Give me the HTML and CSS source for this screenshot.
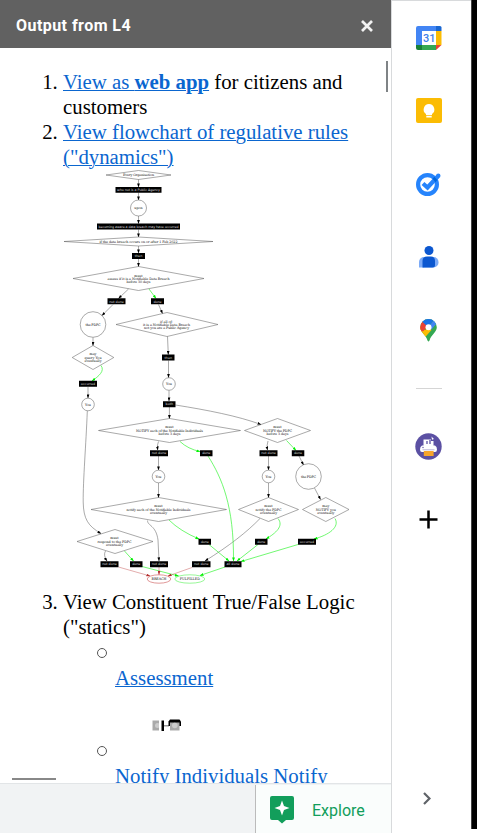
FILE: index.html
```html
<!DOCTYPE html>
<html lang="en">
<head>
<meta charset="utf-8">
<title>Output from L4</title>
<link rel="stylesheet" href="styles.css">
</head>
<body>
<div class="app">
  <main class="panel">
    <header class="panel-header">
      <h1>Output from L4</h1>
      <svg class="close" width="14" height="14" viewBox="0 0 14 14"><path d="M2 2l10 10M12 2L2 12"/></svg>
    </header>
    <div class="content">
      <ol class="outputs">
        <li><a href="#">View as <b>web app</b></a> for citizens and customers</li>
        <li><a href="#">View flowchart of regulative rules ("dynamics")</a>
          <svg class="flow" width="288" height="420" viewBox="63 170 288 420">
            <defs>
              <marker id="k" markerUnits="userSpaceOnUse" markerWidth="4" markerHeight="3" refX="3.6" refY="1.5" orient="auto"><path d="M0 .1L4 1.5L0 2.900z" fill="#000"/></marker>
              <marker id="g" markerUnits="userSpaceOnUse" markerWidth="4" markerHeight="3" refX="3.6" refY="1.5" orient="auto"><path d="M0 .1L4 1.5L0 2.900z" fill="#00f000"/></marker>
              <marker id="r" markerUnits="userSpaceOnUse" markerWidth="4" markerHeight="3" refX="3.6" refY="1.5" orient="auto"><path d="M0 .1L4 1.5L0 2.900z" fill="#b22a2a"/></marker>
            </defs>
            <g class="edge">
              <path d="M138.500 179.500V187"/><path d="M138.500 192.500V200"/><path d="M138.500 216V223.500"/><path d="M138.500 229.500V237"/><path d="M138.500 246V253"/><path d="M138.500 259V266.500"/>
              <path d="M128.500 289L118.500 298.500"/><path d="M113 304.500L102 315.500"/><path d="M158.500 304.500L162.500 313.500"/>
              <path d="M93 337.500V345.500"/><path d="M88 387V398"/><path d="M167.500 336.500L168.300 354.500"/><path d="M168.500 360.500V377.500"/><path d="M169 390.500V401"/><path d="M169.400 407V418.500"/>
              <path d="M175.500 405C207 410 238 416 261 424.500"/>
              <path d="M87.300 411C86 445 83 480 83.200 502C83.500 519 88 526 101 533.500"/>
              <path d="M158.500 441.500Q157 444 157.700 450"/><path d="M158.500 456V470"/><path d="M158.500 483V497.500"/>
              <path d="M147.500 520.500C147.500 526 156 525 158 540L159 561"/><path d="M105.500 551Q103 555 107 561"/>
              <path d="M268 441Q266.500 445 267.500 450"/><path d="M268.500 456V470"/><path d="M268.500 483V497.500"/><path d="M299 456L303.500 465"/><path d="M314.500 488L320.500 499.500"/>
              <path d="M260 518.500C247 532 229 546 205 561"/>
            </g>
            <g class="edge green">
              <path d="M149 289L156 298.500"/><path d="M101 365.500C105 371 99 376 92 381"/><path d="M180 441.500Q188 449 200 451.500"/>
              <path d="M208 456C222 478 234 506 233.500 561"/><path d="M169 520Q180 531 199 539"/><path d="M209 544.500L229 561"/><path d="M124.500 551L133.500 561"/>
              <path d="M286.500 440.500L296 450.500"/><path d="M278 518.500C284 526 276 533 266 539"/><path d="M335 518.500C340 527 329 535 314 539"/>
              <path d="M258 544.500L237 561"/><path d="M298 544.500L241 561.500"/><path d="M142 566.500L178.500 576"/><path d="M225 567L200 575.500"/>
            </g>
            <g class="edge red"><path d="M118.500 567L150 576"/><path d="M159 567V574.500"/><path d="M192 567.500L168 576"/></g>
            <g class="shape">
              <path d="M106 175L138.500 170.500L171 175L138.500 179.500z"/><path d="M64 241.500L138.500 237L213 241.500L138.500 246z"/>
              <path d="M73 278.500L138.500 266.500L204 278.500L138.500 290.500z"/><path d="M116 324.500L167 312.500L218 324.500L167 336.500z"/>
              <path d="M72.200 357.500L93 345.500L113.800 357.500L93 369.500z"/><path d="M98.500 430.500L169.500 418.500L240.500 430.500L169.500 442.500z"/>
              <path d="M244.500 430.500L277.500 418.500L310.500 430.500L277.500 442.500z"/><path d="M91 509.500L158.500 497.500L226.500 509.500L158.500 521.500z"/>
              <path d="M238.500 509.500L268.500 497.500L298.500 509.500L268.500 521.500z"/><path d="M302.500 509.500L325.800 497.500L349 509.500L325.800 521.500z"/>
              <path d="M77 541.500L115 529.500L153 541.500L115 553.500z"/>
              <circle cx="138.500" cy="208" r="8"/><circle cx="93" cy="324.500" r="12.800"/><circle cx="88" cy="404.500" r="6.300"/><circle cx="169" cy="384" r="6.300"/>
              <circle cx="158.500" cy="476.500" r="6.300"/><circle cx="268.500" cy="476.500" r="6.300"/><circle cx="308.500" cy="476.500" r="12.800"/>
              <ellipse class="red-line" cx="159" cy="579" rx="11.800" ry="4.200"/><ellipse class="green-line" cx="189.800" cy="579" rx="15" ry="4.200"/>
            </g>
            <g class="box">
              <path d="M115.500 187h46v5.700h-46zM97 223.500h83v6h-83zM132 253h13v6h-13zM107.500 298.300h18v6h-18zM151 298.300h13v6h-13zM162 354.500h12.500v6h-12.500zM79 380.800h18v6h-18zM163 401.200h12.500v6h-12.500z"/>
              <path d="M150 450.200h18v6h-18zM200 450.200h12.500v6h-12.500zM259.500 450.200h18v6h-18zM291.800 450.200h12.500v6h-12.500zM198.500 538.700h12.500v6h-12.500zM255 538.700h12.500v6h-12.500zM298 538.700h18v6h-18z"/>
              <path d="M100.500 561.200h18v6h-18zM130 561.200h12.500v6h-12.500zM150 561.200h18v6h-18zM192 561.200h18.500v6h-18.500zM224.500 561.200h17v6h-17z"/>
            </g>
            <g class="tag">
              <text x="138.500" y="191.200" textLength="43">who not is a Public Agency</text><text x="138.500" y="227.700" textLength="80">becoming aware a data breach may have occurred</text><text x="138.500" y="257.200">then</text>
              <text x="116.500" y="302.500">not done</text><text x="157.500" y="302.500">done</text><text x="168.300" y="358.700">then</text><text x="88" y="385">occurred</text><text x="169.300" y="405.400">both</text>
              <text x="159" y="454.400">not done</text><text x="206.300" y="454.400">done</text><text x="268.500" y="454.400">not done</text><text x="298" y="454.400">done</text>
              <text x="204.800" y="542.900">done</text><text x="261.300" y="542.900">done</text><text x="307" y="542.900">occurred</text>
              <text x="109.500" y="565.400">not done</text><text x="136.300" y="565.400">done</text><text x="159" y="565.400">not done</text><text x="201.300" y="565.400">not done</text><text x="233" y="565.400">all done</text>
            </g>
            <g class="label">
              <text x="138.500" y="176.300" textLength="31">Every Organisation</text><text x="138.500" y="209.300">upon</text><text x="138.500" y="242.800" textLength="78">if the data breach occurs on or after 1 Feb 2022</text>
              <text x="138.500" y="276.500">must</text><text x="138.500" y="279.900" textLength="62">assess if it is a Notifiable Data Breach</text><text x="138.500" y="283.300" textLength="24">before 30 days</text>
              <text x="93" y="325.800" textLength="15">the PDPC</text><text x="166.500" y="322.500">if all of:</text><text x="166.500" y="325.900" textLength="47">it is a Notifiable Data Breach</text><text x="166.500" y="329.300" textLength="45">not you are a Public Agency</text>
              <text x="93" y="355.300">may</text><text x="93" y="358.700" textLength="17">query You</text><text x="93" y="362.100" textLength="17">eventually</text><text x="88" y="405.800">You</text><text x="169" y="385.300">You</text>
              <text x="169.500" y="428.200">must</text><text x="169.500" y="431.600" textLength="67">NOTIFY each of the Notifiable Individuals</text><text x="169.500" y="435" textLength="22">before 3 days</text>
              <text x="277.500" y="428.200">must</text><text x="277.500" y="431.600" textLength="29">NOTIFY the PDPC</text><text x="277.500" y="435" textLength="22">before 3 days</text>
              <text x="158.500" y="477.800">You</text><text x="268.500" y="477.800">You</text><text x="308.500" y="477.800" textLength="15">the PDPC</text>
              <text x="158.500" y="507.200">must</text><text x="158.500" y="510.600" textLength="64">notify each of the Notifiable Individuals</text><text x="158.500" y="514" textLength="17">eventually</text>
              <text x="268.500" y="507.200">must</text><text x="268.500" y="510.600" textLength="26">notify the PDPC</text><text x="268.500" y="514" textLength="17">eventually</text>
              <text x="325.800" y="507.200">may</text><text x="325.800" y="510.600" textLength="20">NOTIFY you</text><text x="325.800" y="514" textLength="17">eventually</text>
              <text x="114.500" y="539.200">must</text><text x="114.500" y="542.600" textLength="34">respond to the PDPC</text><text x="114.500" y="546" textLength="17">eventually</text>
              <text x="159" y="580.300" textLength="15">BREACH</text><text x="189.800" y="580.300" textLength="20">FULFILLED</text>
            </g>
          </svg>
        </li>
        <li>View Constituent True/False Logic ("statics")
          <ul class="logic">
            <li>
              <a href="#">Assessment</a>
              <svg class="thumb" width="30" height="14" viewBox="0 0 30 14"><path fill="#aaa" d="M.5 2.500h7v10h-7z"/><circle cx="5.500" cy="7.500" r="2.500" fill="#ccc"/><path fill="#fff" d="M7 1h2v12H7z"/><path d="M9.500 2.500h2.500v10.500H9.500z"/><path d="M12 7h5v1.500h-5z" fill="#999"/><path d="M16.500 8V3.500L18 1.500h9.500l1.500 2V8z"/><path fill="#aaa" d="M18 4.500h9.500v8H18z"/><circle cx="22.800" cy="7.500" r="2.800" fill="#ccc"/></svg>
            </li>
            <li><a href="#">Notify Individuals Notify</a></li>
          </ul>
        </li>
      </ol>
      <div class="scroll-y"></div>
      <div class="scroll-x"></div>
    </div>
    <footer class="bottom">
      <div class="explore">
        <svg width="24" height="28" viewBox="0 0 24 28"><path fill="#129e5b" d="M2 0h20q2 0 2 2v20q0 2-2 2h-6l-4 3.500L8 24H2q-2 0-2-2V2q0-2 2-2z"/><path fill="#fff" d="M12 4.500l2 5.500 5.500 2-5.500 2-2 5.500-2-5.500-5.500-2 5.500-2z"/></svg>
        <span>Explore</span>
      </div>
    </footer>
  </main>
  <aside class="rail">
    <svg class="cal" width="26" height="24" viewBox="0 0 26 24"><path fill="#4285f4" d="M2 0h18v5H6v14H0V2q0-2 2-2z"/><path fill="#1967d2" d="M20 0h4q1.500 0 1.500 1.500V5H20z"/><path fill="#fbbc04" d="M20 5h5.500v14H20z"/><path fill="#34a853" d="M6 19h14v5H6z"/><path fill="#188038" d="M0 19h6v5H2q-2 0-2-2z"/><path fill="#ea4335" d="M20 19h5.500L20 24z"/><path fill="#fff" d="M6 5h14v14H6z"/><text x="13.200" y="16">31</text></svg>
    <svg class="keep" width="26" height="25" viewBox="0 0 26 25"><rect width="26" height="25" rx="2" fill="#fbbc04"/><path fill="#fff" d="M13 6a5.500 5.500 0 0 0-3 10v1h6v-1a5.500 5.500 0 0 0-3-10zM10.300 17.800h5.400v1.800h-5.400z"/></svg>
    <svg class="tasks" width="25" height="23" viewBox="0 0 25 23"><circle cx="11.500" cy="11.500" r="9.400" fill="none" stroke="#2684fc" stroke-width="4.200"/><path d="M7 10.500l4.500 4L22 3.200" fill="none" stroke="#2684fc" stroke-width="4.200"/><circle cx="22.300" cy="2.700" r="2.200" fill="#2684fc"/><path fill="#0066da" d="M16.500 5.800l2.900 3.400 2-2.300-3-3.200z"/></svg>
    <svg class="contacts" width="20" height="22" viewBox="0 0 20 22"><rect y="11" width="19.500" height="10.500" rx="5" fill="#7baaf7"/><path fill="#7baaf7" d="M0 16h5v5.500H0z"/><path fill="#0b57d0" d="M8 10.500h4q4 0 4 4.500v4q0 2.500-2.500 2.500h-10V15q0-4.500 4.500-4.500z"/><circle cx="10" cy="4.500" r="4.500" fill="#0b57d0"/></svg>
    <svg class="maps" width="17" height="23" viewBox="0 0 17 23"><defs><clipPath id="pin"><path d="M8.500 0a8.300 8.300 0 0 0-8.300 8.300c0 5 5.500 7.200 7.300 13.200q1 2 2 0c1.800-6 7.300-8.200 7.300-13.200A8.300 8.300 0 0 0 8.500 0z"/></clipPath></defs><g clip-path="url(#pin)"><path fill="#34a853" d="M0 0h17v23H0z"/><path fill="#fbbc04" d="M0 7l5 4 3.500-3 3 3-8 9H0z"/><path fill="#ea4335" d="M0 0l8 7-4.500 5L0 13z"/><path fill="#1a73e8" d="M2 2.500L8 8l6-7V0H2z"/><path fill="#4285f4" d="M14 1L8.500 8l3 2.500L17 4V0z"/></g><circle cx="8.500" cy="8.200" r="3" fill="#fff"/></svg>
    <hr>
    <svg class="printer" width="27" height="27" viewBox="0 0 27 27"><circle cx="13.500" cy="13.500" r="13.200" fill="#5b50a3"/><path fill="#fff" d="M8.500 6.500h7.500v1.500h2.500V13h-10zM16.500 3.500l2.500 2.500-2 .7zM7 12.500h13q2 1 2 4 0 2.500-2 2.500H7q-2 0-2-2.500 0-3 2-4z"/><path d="M12 8v3M15 7v4" stroke="#5b50a3" stroke-width="1.300"/><path d="M7.500 16.800h12" stroke="#b9b5d8"/><circle cx="8" cy="14.500" r=".7" fill="#5b50a3"/><path fill="#f7a52c" d="M8.800 18h9.800v5H8.800z"/></svg>
    <svg class="plus" width="19" height="19" viewBox="0 0 19 19"><path d="M9.500 .5v18M.5 9.500h18"/></svg>
    <svg class="chevron" width="8" height="13" viewBox="0 0 8 13"><path d="M1 1l5.500 5.500L1 12"/></svg>
  </aside>
  <div class="edge-strip"></div>
</div>
</body>
</html>
```
FILE: styles.css
```css
* { box-sizing: border-box; }
body { margin: 0; background: #fff; overflow: hidden; }
svg { display: block; flex: none; }
.app { display: flex; width: 477px; height: 833px; overflow: hidden; }

.panel { display: flex; flex-direction: column; width: 391px; }
.panel-header { flex: none; height: 48px; padding: 3px 17px 0 16px; display: flex; align-items: center; justify-content: space-between; background: #616161; }
.panel-header h1 { margin: 0; font: 700 16px/24px Roboto, sans-serif; letter-spacing: .45px; color: #fff; }
.close { fill: none; stroke: #f2f2f2; stroke-width: 2.700; }

.content { position: relative; flex: 1; min-height: 0; overflow: hidden; padding-top: 21px; font: 20.8px/25px "Liberation Serif", serif; color: #000; }
.content a { color: #0b66cf; text-decoration: underline; text-decoration-thickness: 1px; }
.outputs { margin: 0; padding: 0 28px 0 63px; }
.flow { overflow: visible; margin: 1px 0 -1px; }
.edge path { fill: none; stroke: #555; stroke-width: .5; marker-end: url(#k); }
.edge.green path { stroke: #35f535; stroke-width: .7; marker-end: url(#g); }
.edge.red path { stroke: #c65a5a; marker-end: url(#r); }
.shape { fill: none; stroke: #555; stroke-width: .5; }
.red-line { stroke: #c03030; }
.green-line { stroke: #30ee30; }
.box { fill: #000; }
.tag, .label { font-family: "DejaVu Serif", serif; font-size: 3.300px; text-anchor: middle; fill: #111; }
.tag { font-family: "DejaVu Sans", sans-serif; fill: #ddd; }
.logic { list-style: none; margin: 0; padding: 0 0 0 52px; white-space: nowrap; }
.logic li { display: flow-root; }
.logic li::before { content: ""; display: block; width: 8px; height: 8px; margin: 9px 0 7px -18px; border: 1px solid #555; border-radius: 50%; }
.thumb { margin: 28px 0 5px 37px; }
.scroll-y { position: absolute; top: 13px; right: 3px; width: 2px; height: 31px; background: #7f8386; }
.scroll-x { position: absolute; left: 12px; bottom: 3px; width: 44px; height: 2px; background: #888; }

.bottom { flex: none; height: 50px; display: flex; justify-content: flex-end; background: #f1f3f4; border-top: 1px solid #e2e5e7; }
.explore { width: 136px; display: flex; align-items: center; gap: 18px; padding-left: 14px; margin-top: 1px; background: #fafdfc; border-left: 1px solid #bbb; color: #129e5b; font: 400 16px/24px Roboto, sans-serif; }
.explore span { padding-top: 4px; }
.explore svg { margin-top: 2px; }

.rail { width: 80px; display: flex; flex-direction: column; align-items: center; border-left: 1px solid #d8dadc; border-top: 1px solid #d8dadc; padding-right: 6px; }
.cal { margin-top: 25px; }
.cal text { font: 500 11px Roboto, sans-serif; fill: #3f7fe8; text-anchor: middle; }
.keep { margin-top: 48px; }
.tasks { margin-top: 50px; }
.contacts { margin-top: 50px; }
.maps { margin-top: 51px; }
.rail hr { width: 26px; height: 1px; margin: 46px 0 0; border: 0; background: #d5d5d5; }
.printer { margin-top: 44px; }
.plus { margin-top: 50px; fill: none; stroke: #000; stroke-width: 2.500; }
.chevron { margin: 263px 3px 0 0; fill: none; stroke: #5f6368; stroke-width: 2.200; }
.edge-strip { width: 6px; height: 829px; background: #000; border-left: 1px solid #444; }
```
